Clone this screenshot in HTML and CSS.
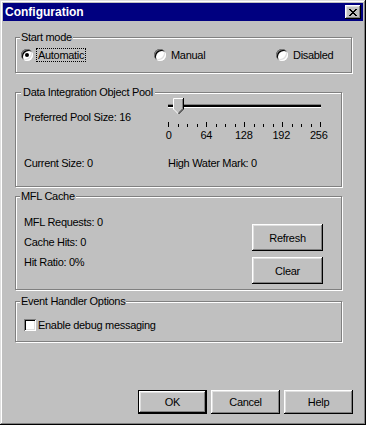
FILE: index.html
```html
<!DOCTYPE html>
<html lang="en">
<head>
    <meta charset="UTF-8">
    <title>Configuration</title>
    <link rel="stylesheet" href="styles.css">
</head>
<body>
    <div class="window">
        <div class="titlebar">
            <span class="title">Configuration</span>
            <button class="close-btn" type="button">
                <svg width="8" height="7" viewBox="0 0 8 7">
                    <path d="M0 0h2v1H0z M6 0h2v1H6z M1 1h2v1H1z M5 1h2v1H5z M2 2h4v1H2z M3 3h2v1H3z M2 4h4v1H2z M1 5h2v1H1z M5 5h2v1H5z M0 6h2v1H0z M6 6h2v1H6z" fill="#000"/>
                </svg>
            </button>
        </div>

        <div class="content">
            <fieldset class="group group-start">
                <legend>Start mode</legend>
                <div class="radios">
                    <label class="radio"><span class="radio-box checked"></span><span class="radio-text focused">Automatic</span></label>
                    <label class="radio"><span class="radio-box"></span><span class="radio-text">Manual</span></label>
                    <label class="radio"><span class="radio-box"></span><span class="radio-text">Disabled</span></label>
                </div>
            </fieldset>

            <fieldset class="group group-pool">
                <legend>Data Integration Object Pool</legend>
                <div class="pool">
                    <div class="pool-label">Preferred Pool Size: 16</div>
                    <div class="slider">
                        <div class="rail"><div class="track"></div></div>
                        <svg class="thumb" width="11" height="17" viewBox="0 0 11 17">
                            <path d="M0.5 0.5H10.5V11L5.5 16L0.5 11Z" fill="#c0c0c0"/>
                            <path d="M0.5 11.5V0.5H10" fill="none" stroke="#fff"/>
                            <path d="M0.5 11L5.5 16" fill="none" stroke="#fff"/>
                            <path d="M10.5 0V11L5.5 16" fill="none" stroke="#000"/>
                            <path d="M9.5 1V10.6L5.5 14.6" fill="none" stroke="#808080"/>
                        </svg>
                        <div class="ticks">
                            <span class="tick major"></span><span class="tick"></span><span class="tick"></span><span class="tick"></span>
                            <span class="tick major"></span><span class="tick"></span><span class="tick"></span><span class="tick"></span>
                            <span class="tick major"></span><span class="tick"></span><span class="tick"></span><span class="tick"></span>
                            <span class="tick major"></span><span class="tick"></span><span class="tick"></span><span class="tick"></span>
                            <span class="tick major"></span>
                        </div>
                        <div class="scale">
                            <span>0</span><span>64</span><span>128</span><span>192</span><span>256</span>
                        </div>
                    </div>
                    <div>Current Size: 0</div>
                    <div>High Water Mark: 0</div>
                </div>
            </fieldset>

            <fieldset class="group group-cache">
                <legend>MFL Cache</legend>
                <div class="cache">
                    <div class="stats">
                        <div>MFL Requests: 0</div>
                        <div>Cache Hits: 0</div>
                        <div>Hit Ratio: 0%</div>
                    </div>
                    <div class="cache-actions">
                        <button class="btn btn-side" type="button">Refresh</button>
                        <button class="btn btn-side" type="button">Clear</button>
                    </div>
                </div>
            </fieldset>

            <fieldset class="group group-events">
                <legend>Event Handler Options</legend>
                <label class="check"><span class="check-box"></span>Enable debug messaging</label>
            </fieldset>

            <div class="actions">
                <button class="btn btn-default" type="button">OK</button>
                <button class="btn" type="button">Cancel</button>
                <button class="btn" type="button">Help</button>
            </div>
        </div>
    </div>
</body>
</html>
```

FILE: styles.css
```css
body {
    margin: 0;
    font-family: 'Liberation Sans', Arial, sans-serif;
    font-size: 11px;
    letter-spacing: -0.3px;
    color: #000;
    background: #c0c0c0;
}
.window {
    width: 366px;
    height: 425px;
    box-sizing: border-box;
    padding: 3px;
    display: flex;
    flex-direction: column;
    background: #c0c0c0;
    box-shadow: inset -1px -1px #000, inset 1px 1px #dfdfdf, inset -2px -2px #808080, inset 2px 2px #fff;
}
.titlebar {
    height: 18px;
    display: flex;
    align-items: center;
    justify-content: space-between;
    padding: 0 2px;
    background: #000080;
}
.title {
    color: #fff;
    font-weight: bold;
    font-size: 12px;
    letter-spacing: 0;
}
.close-btn {
    width: 16px;
    height: 14px;
    padding: 0;
    border: none;
    display: flex;
    align-items: center;
    justify-content: center;
    background: #c0c0c0;
    box-shadow: inset -1px -1px #000, inset 1px 1px #fff, inset -2px -2px #808080, inset 2px 2px #dfdfdf;
}
.content {
    flex: 1;
    display: flex;
    flex-direction: column;
    align-items: flex-start;
    padding: 10px 10px 8px 12px;
}
.group {
    margin: 0;
    padding: 0;
    min-width: 0;
    box-sizing: border-box;
    border: 1px solid #808080;
    box-shadow: inset 1px 1px #fff, 1px 1px #fff;
}
.group legend {
    margin-left: 4px;
    padding: 0 1px;
    line-height: 13px;
    background: #c0c0c0;
}
.group-start {
    width: 337px;
    height: 42px;
}
.group-pool {
    width: 327px;
    height: 101px;
    margin-top: 13px;
}
.group-pool legend {
    margin-left: 5px;
    padding: 0 2px;
}
.group-cache {
    width: 327px;
    height: 100px;
    margin-top: 3px;
}
.group-events {
    width: 327px;
    height: 47px;
    margin-top: 5px;
}

/* radio buttons */
.radios {
    display: grid;
    grid-template-columns: 133px 122px auto;
    padding: 5px 0 0 5px;
}
.radio {
    display: flex;
    align-items: center;
    gap: 4px;
    height: 12px;
}
.radio-box {
    position: relative;
    width: 12px;
    height: 12px;
    border-radius: 50%;
    background: #fff;
    box-shadow: inset 1px 1px #808080, inset -1px -1px #fff, inset 2px 2px #000, inset -2px -2px #dfdfdf;
}
.radio-box.checked::after {
    content: "";
    position: absolute;
    left: 4px;
    top: 4px;
    width: 4px;
    height: 4px;
    border-radius: 50%;
    background: #000;
}
.radio-text {
    padding: 0 1px;
    line-height: 12px;
}
.focused {
    outline: 1px dotted #000;
}

/* pool slider */
.pool {
    display: grid;
    grid-template-columns: 144px 1fr;
    row-gap: 15px;
    padding-left: 8px;
}
.pool-label {
    padding-top: 12px;
    line-height: 13px;
}
.pool > div {
    line-height: 13px;
}
.slider {
    position: relative;
    width: 153px;
    margin-top: -1px;
}
.rail {
    height: 17px;
}
.track {
    margin-top: 6px;
    height: 2px;
    border-top: 1px solid #808080;
    border-bottom: 1px solid #fff;
    background: #000;
}
.thumb {
    position: absolute;
    left: 5px;
    top: 0;
}
.ticks {
    display: flex;
    justify-content: space-between;
    align-items: flex-end;
    height: 5px;
    margin-top: 1px;
}
.tick {
    width: 1px;
    height: 3px;
    background: #000;
}
.tick.major {
    height: 5px;
}
.scale {
    display: grid;
    grid-template-columns: repeat(5, 37.5px);
    margin: 2px 0 0 -18px;
    line-height: 13px;
    text-align: center;
}

/* cache */
.cache {
    display: flex;
    justify-content: space-between;
    padding-left: 8px;
}
.stats {
    padding-top: 9px;
    line-height: 20px;
}
.cache-actions {
    display: flex;
    flex-direction: column;
    gap: 6px;
    padding-top: 21px;
    margin-right: 18px;
}

/* buttons */
.btn {
    width: 69px;
    height: 24px;
    padding: 0;
    border: none;
    font-family: inherit;
    font-size: 11px;
    letter-spacing: -0.3px;
    color: #000;
    background: #c0c0c0;
    box-shadow: inset -1px -1px #000, inset 1px 1px #fff, inset -2px -2px #808080, inset 2px 2px #dfdfdf;
}
.btn-side {
    width: 71px;
    height: 27px;
}
.btn-default {
    border: 1px solid #000;
}
.actions {
    align-self: stretch;
    margin-top: auto;
    display: flex;
    justify-content: flex-end;
    gap: 4px;
}

/* checkbox */
.check {
    display: flex;
    align-items: center;
    gap: 2px;
    margin: 11px 0 0 8px;
    height: 12px;
}
.check-box {
    width: 12px;
    height: 12px;
    background: #fff;
    box-shadow: inset 1px 1px #808080, inset -1px -1px #fff, inset 2px 2px #000, inset -2px -2px #dfdfdf;
}
```
